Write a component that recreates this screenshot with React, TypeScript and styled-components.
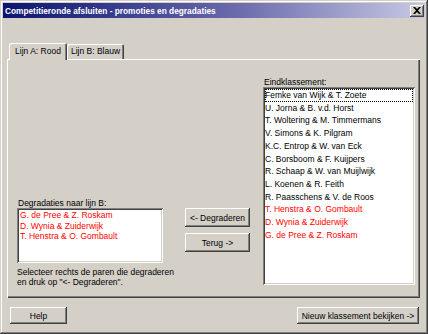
import styled, { createGlobalStyle } from 'styled-components';

const GlobalStyle = createGlobalStyle`
  html, body {
    margin: 0;
    padding: 0;
    background: #d4d0c8;
  }
  body {
    font-family: "Liberation Sans", Arial, sans-serif;
    font-size: 8.5px;
    color: #000;
  }
`;

const raised = `
  box-shadow: inset -1px -1px #404040, inset 1px 1px #ffffff,
    inset -2px -2px #808080, inset 2px 2px #d4d0c8;
`;

const sunken = `
  box-shadow: inset 1px 1px #808080, inset -1px -1px #ffffff,
    inset 2px 2px #404040, inset -2px -2px #d4d0c8;
`;

const Window = styled.div`
  width: 428px;
  height: 334px;
  box-sizing: border-box;
  padding: 3px;
  background: #d4d0c8;
  box-shadow: inset -1px -1px #404040, inset 1px 1px #d4d0c8,
    inset -2px -2px #808080, inset 2px 2px #ffffff;
  display: flex;
  flex-direction: column;
`;

const TitleBar = styled.div`
  height: 15px;
  display: flex;
  align-items: center;
  justify-content: space-between;
  padding: 0 1px 0 2px;
  background: linear-gradient(to right, #0a1470, #6a6aac 55%, #c8c8e4);
  color: #fff;
  font-weight: bold;
  font-size: 8.3px;
  white-space: nowrap;
`;

const CloseButton = styled.div`
  width: 14px;
  height: 12px;
  background: #d4d0c8;
  ${raised}
  display: flex;
  align-items: center;
  justify-content: center;
`;

const Content = styled.div`
  padding: 25px 5px 0 4px;
  display: flex;
  flex-direction: column;
`;

const TabStrip = styled.div`
  display: flex;
  align-items: flex-end;
  height: 17px;
  padding-left: 2px;
  position: relative;
  z-index: 1;
  margin-bottom: -1px;
`;

const Tab = styled.div<{ $active?: boolean }>`
  box-sizing: border-box;
  width: ${(p) => (p.$active ? 58 : 57)}px;
  height: ${(p) => (p.$active ? 17 : 15)}px;
  padding-top: ${(p) => (p.$active ? 3 : 2)}px;
  text-align: center;
  line-height: 10px;
  background: #d4d0c8;
  border-radius: 2px 2px 0 0;
  box-shadow: inset 1px 1px #ffffff, inset -1px 0 #404040, inset -2px 0 #808080;
  ${(p) => !p.$active && 'margin-bottom: 1px;'}
`;

const Panel = styled.div`
  height: 239px;
  box-sizing: border-box;
  display: flex;
  align-items: flex-end;
  padding: 0 5px 11px 10px;
  box-shadow: inset 1px 1px #ffffff, inset -1px -1px #404040,
    inset -2px -2px #808080;
`;

const Column = styled.div<{ $width: number; $gap: number; $lift?: number }>`
  width: ${(p) => p.$width}px;
  margin-right: ${(p) => p.$gap}px;
  margin-bottom: ${(p) => p.$lift || 0}px;
  display: flex;
  flex-direction: column;
  flex-shrink: 0;
`;

const Label = styled.div`
  line-height: 10px;
  height: 10px;
  padding-left: 1px;
  white-space: nowrap;
`;

const ListBox = styled.div<{ $height: number; $row: number }>`
  height: ${(p) => p.$height}px;
  box-sizing: border-box;
  padding: 2px 2px;
  background: #fff;
  ${sunken}
  line-height: ${(p) => p.$row}px;
`;

const Item = styled.div<{ $red?: boolean; $focus?: boolean; $indent: number }>`
  padding-left: ${(p) => p.$indent}px;
  color: ${(p) => (p.$red ? '#ff0000' : '#000')};
  white-space: nowrap;
  box-sizing: border-box;
  ${(p) => p.$focus && 'outline: 1px dotted #000; outline-offset: -1px;'}
`;

const Hint = styled.div`
  margin-top: 4px;
  line-height: 10px;
  white-space: nowrap;
`;

const Button = styled.div<{ $width: number }>`
  width: ${(p) => p.$width}px;
  height: 19px;
  box-sizing: border-box;
  background: #d4d0c8;
  ${raised}
  display: flex;
  align-items: center;
  justify-content: center;
  white-space: nowrap;
`;

const ButtonStack = styled.div`
  display: flex;
  flex-direction: column;
  gap: 6px;
`;

const Footer = styled.div`
  margin-top: 9px;
  display: flex;
  justify-content: space-between;
  padding: 0 1px 0 3px;
`;

const SmallButton = styled(Button)`
  height: 17px;
`;

const degradaties = [
  'G. de Pree & Z. Roskam',
  'D. Wynia & Zuiderwijk',
  'T. Henstra & O. Gombault',
];

const eindklassement: { name: string; red?: boolean }[] = [
  { name: 'Femke van Wijk & T. Zoete' },
  { name: 'U. Jorna & B. v.d. Horst' },
  { name: 'T. Woltering & M. Timmermans' },
  { name: 'V. Simons & K. Pilgram' },
  { name: 'K.C. Entrop & W. van Eck' },
  { name: 'C. Borsboom & F. Kuijpers' },
  { name: 'R. Schaap & W. van Muijlwijk' },
  { name: 'L. Koenen & R. Feith' },
  { name: 'R. Paasschens & V. de Roos' },
  { name: 'T. Henstra & O. Gombault', red: true },
  { name: 'D. Wynia & Zuiderwijk', red: true },
  { name: 'G. de Pree & Z. Roskam', red: true },
];

const App: React.FC = () => {
  return (
    <>
      <GlobalStyle />
      <Window>
        <TitleBar>
          <span>Competitieronde afsluiten - promoties en degradaties</span>
          <CloseButton>
            <svg width="8" height="7" viewBox="0 0 8 7">
              <path d="M0 0h2l2 2 2-2h2L5 3.5 8 7H6L4 5 2 7H0l3-3.5z" fill="#000" />
            </svg>
          </CloseButton>
        </TitleBar>
        <Content>
          <TabStrip>
            <Tab $active>Lijn A: Rood</Tab>
            <Tab>Lijn B: Blauw</Tab>
          </TabStrip>
          <Panel>
            <Column $width={146} $gap={22}>
              <Label>Degradaties naar lijn B:</Label>
              <ListBox $height={55} $row={10.5}>
                {degradaties.map((name, index) => (
                  <Item key={index} $red $indent={1}>
                    {name}
                  </Item>
                ))}
              </ListBox>
              <Hint>
                Selecteer rechts de paren die degraderen
                <br />
                en druk op &quot;&lt;- Degraderen&quot;.
              </Hint>
            </Column>
            <Column $width={65} $gap={13} $lift={35}>
              <ButtonStack>
                <Button $width={65}>&lt;- Degraderen</Button>
                <Button $width={65}>Terug -&gt;</Button>
              </ButtonStack>
            </Column>
            <Column $width={152} $gap={0} $lift={2}>
              <Label>Eindklassement:</Label>
              <ListBox $height={198} $row={12.7}>
                {eindklassement.map((entry, index) => (
                  <Item key={index} $red={entry.red} $focus={index === 0} $indent={0}>
                    {entry.name}
                  </Item>
                ))}
              </ListBox>
            </Column>
          </Panel>
          <Footer>
            <SmallButton $width={57}>Help</SmallButton>
            <SmallButton $width={122}>Nieuw klassement bekijken -&gt;</SmallButton>
          </Footer>
        </Content>
      </Window>
    </>
  );
};

export default App;
